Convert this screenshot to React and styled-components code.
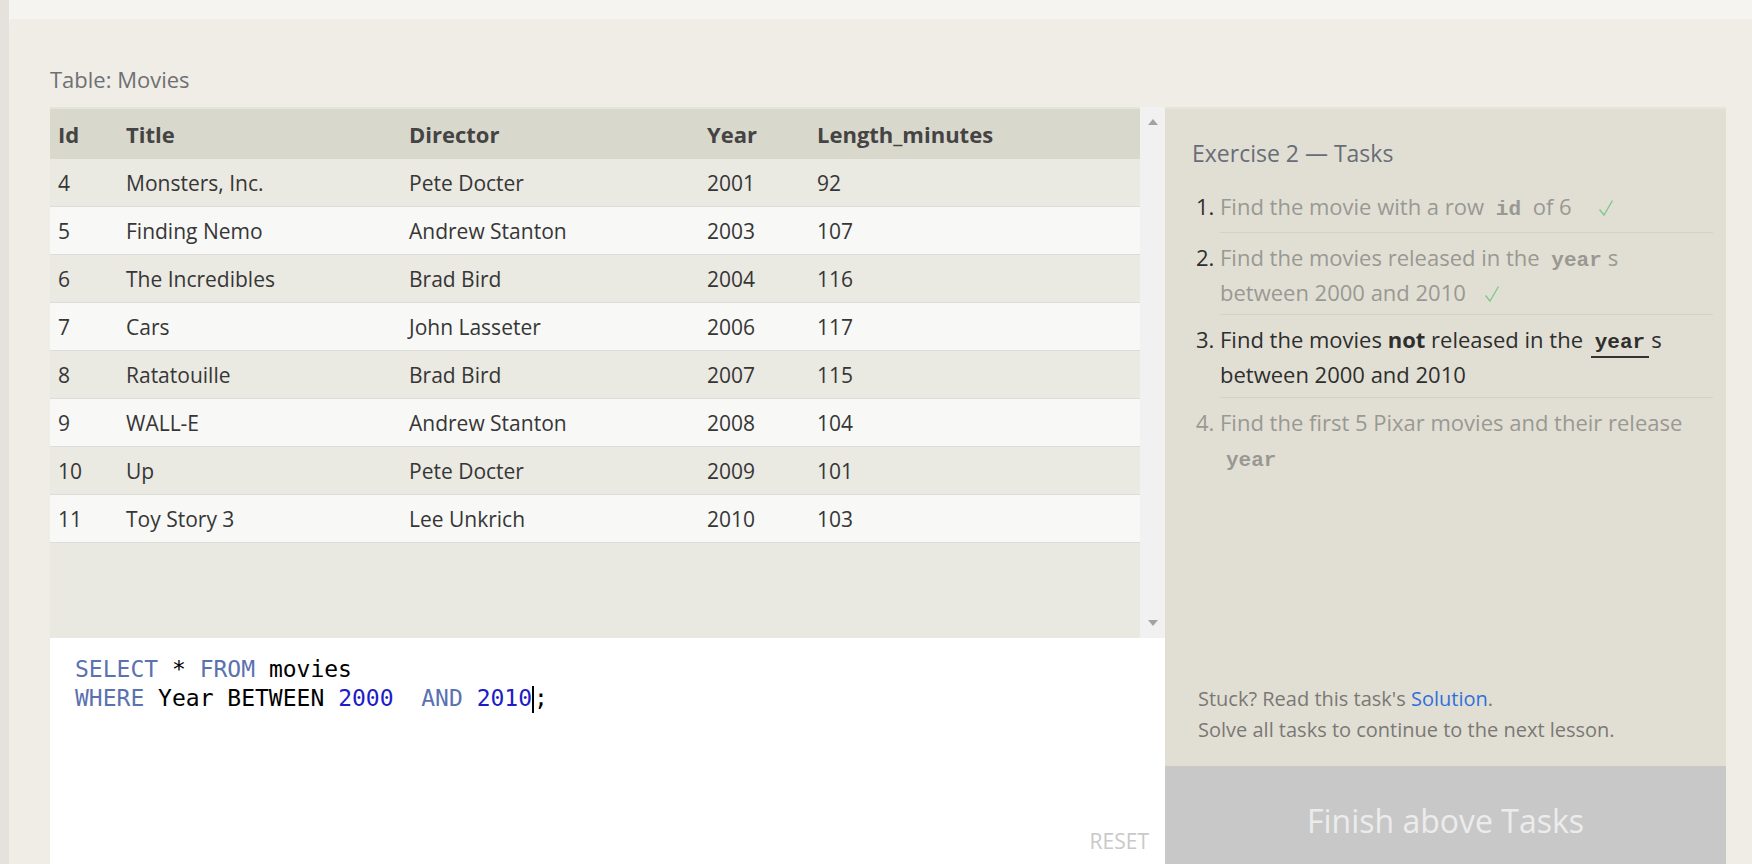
import React from 'react';
import styled, { createGlobalStyle } from 'styled-components';

const movies = [
  { id: 4, title: 'Monsters, Inc.', director: 'Pete Docter', year: 2001, length: 92 },
  { id: 5, title: 'Finding Nemo', director: 'Andrew Stanton', year: 2003, length: 107 },
  { id: 6, title: 'The Incredibles', director: 'Brad Bird', year: 2004, length: 116 },
  { id: 7, title: 'Cars', director: 'John Lasseter', year: 2006, length: 117 },
  { id: 8, title: 'Ratatouille', director: 'Brad Bird', year: 2007, length: 115 },
  { id: 9, title: 'WALL-E', director: 'Andrew Stanton', year: 2008, length: 104 },
  { id: 10, title: 'Up', director: 'Pete Docter', year: 2009, length: 101 },
  { id: 11, title: 'Toy Story 3', director: 'Lee Unkrich', year: 2010, length: 103 },
];

const columns = ['Id', 'Title', 'Director', 'Year', 'Length_minutes'];

const GlobalStyle = createGlobalStyle`
  html, body {
    margin: 0;
    padding: 0;
    background: #f5f4f0;
    font-family: "Open Sans", "Noto Sans", sans-serif;
  }
  * {
    box-sizing: border-box;
  }
`;

const CheckMark = ({ gap }) => (
  <Check $gap={gap} width="16" height="18" viewBox="0 0 16 18">
    <path d="M1.5 10.5 L6 16 L14.5 1.5" fill="none" stroke="#80c98c" strokeWidth="1.4" />
  </Check>
);

const App = () => {
  return (
    <Page>
      <GlobalStyle />
      <Strip />
      <Main>
        <TopBand />
        <Panel>
          <TableLabel>Table: Movies</TableLabel>
          <Workspace>
            <LeftCol>
              <TableArea>
                <TableScroll>
                  <HeaderRow>
                    {columns.map((c) => (
                      <HeadCell key={c}>{c}</HeadCell>
                    ))}
                  </HeaderRow>
                  {movies.map((m, i) => (
                    <Row key={m.id} $even={i % 2 === 1}>
                      <Cell>{m.id}</Cell>
                      <Cell>{m.title}</Cell>
                      <Cell>{m.director}</Cell>
                      <Cell>{m.year}</Cell>
                      <Cell>{m.length}</Cell>
                    </Row>
                  ))}
                </TableScroll>
                <Scrollbar>
                  <svg width="10" height="6" viewBox="0 0 10 6"><path d="M5 0 L10 6 L0 6 Z" fill="#a3a3a3" /></svg>
                  <svg width="10" height="6" viewBox="0 0 10 6"><path d="M0 0 L10 0 L5 6 Z" fill="#a3a3a3" /></svg>
                </Scrollbar>
              </TableArea>
              <Editor>
                <CodeLine>
                  <Kw>SELECT</Kw> * <Kw>FROM</Kw> movies
                </CodeLine>
                <CodeLine>
                  <Kw>WHERE</Kw> Year BETWEEN <Num>2000</Num>  <Kw>AND</Kw> <Num>2010</Num><Caret />;
                </CodeLine>
                <Reset>RESET</Reset>
              </Editor>
            </LeftCol>
            <TasksPanel>
              <TasksTitle>Exercise 2 — Tasks</TasksTitle>
              <TaskList>
                <Task $state="done">
                  <span>Find the movie with a row <Code>id</Code> of 6<CheckMark gap={26} /></span>
                </Task>
                <Task $state="done">
                  <span>Find the movies released in the <Code>year</Code>s between 2000 and 2010<CheckMark gap={18} /></span>
                </Task>
                <Task $state="active">
                  <span>Find the movies <b>not</b> released in the <Code $active>year</Code>s between 2000 and 2010</span>
                </Task>
                <Task $state="todo">
                  <span>Find the first 5 Pixar movies and their release <Code>year</Code></span>
                </Task>
              </TaskList>
              <Spacer />
              <Hint>
                Stuck? Read this task's <a href="#solution">Solution</a>.
                <br />
                Solve all tasks to continue to the next lesson.
              </Hint>
              <FinishButton>Finish above Tasks</FinishButton>
            </TasksPanel>
          </Workspace>
        </Panel>
      </Main>
    </Page>
  );
};

export default App;

const Page = styled.div`
  display: flex;
  width: 100vw;
  height: 100vh;
  overflow: hidden;
`;

const Strip = styled.div`
  width: 9px;
  flex-shrink: 0;
  background: #e5e1dc;
`;

const Main = styled.div`
  flex: 1;
  display: flex;
  flex-direction: column;
  min-width: 0;
`;

const TopBand = styled.div`
  height: 19px;
  flex-shrink: 0;
  background: #f5f4f0;
`;

const Panel = styled.div`
  flex: 1;
  background: #efede6;
  border-top-left-radius: 4px;
  padding: 46px 26px 0 41px;
`;

const TableLabel = styled.div`
  font-size: 22px;
  line-height: 28px;
  color: #6f7073;
  margin-bottom: 14px;
`;

const Workspace = styled.div`
  display: flex;
  height: 767px;
`;

const LeftCol = styled.div`
  flex: 1;
  display: flex;
  flex-direction: column;
  min-width: 0;
`;

const TableArea = styled.div`
  display: flex;
  height: 531px;
  flex-shrink: 0;
  background: #e9e8e1;
`;

const TableScroll = styled.div`
  flex: 1;
  color: #363636;
  font-size: 21px;
`;

const gridCols = '68px 283px 298px 110px 1fr';

const HeaderRow = styled.div`
  display: grid;
  grid-template-columns: ${gridCols};
  height: 52px;
  align-items: center;
  background: #d9d8cc;
  border-top: 2px solid #e5e4dc;
`;

const HeadCell = styled.div`
  padding-left: 8px;
  font-size: 22px;
  font-weight: 700;
  color: #444;
`;

const Row = styled.div`
  display: grid;
  grid-template-columns: ${gridCols};
  height: 48px;
  align-items: center;
  background: ${(p) => (p.$even ? '#f8f8f7' : '#eae9e2')};
  border-bottom: 1px solid #dcdcd8;
`;

const Cell = styled.div`
  padding-left: 8px;
  white-space: nowrap;
`;

const Scrollbar = styled.div`
  width: 25px;
  flex-shrink: 0;
  background: #f1f1f1;
  display: flex;
  flex-direction: column;
  justify-content: space-between;
  align-items: center;
  padding: 12px 0 12px;
`;

const Editor = styled.div`
  flex: 1;
  background: #fff;
  display: flex;
  flex-direction: column;
  padding: 17px 16px 20px 25px;
`;

const CodeLine = styled.div`
  font-family: "DejaVu Sans Mono", "Liberation Mono", monospace;
  font-size: 23px;
  line-height: 29px;
  color: #000;
  white-space: pre;
`;

const Kw = styled.span`
  color: #5a72b0;
`;

const Num = styled.span`
  color: #1c1cc8;
`;

const Caret = styled.span`
  display: inline-block;
  width: 0;
  height: 27px;
  border-left: 2px solid #000;
  vertical-align: -7px;
`;

const Reset = styled.div`
  margin-top: auto;
  align-self: flex-end;
  font-size: 21px;
  line-height: 26px;
  color: #c9c9c9;
`;

const TasksPanel = styled.div`
  width: 561px;
  flex-shrink: 0;
  display: flex;
  flex-direction: column;
  background: #e1dfd4;
  border-top: 2px solid #e6e4dc;
`;

const TasksTitle = styled.div`
  padding: 29px 0 0 27px;
  font-size: 23px;
  line-height: 30px;
  color: #686d77;
`;

const TaskList = styled.ol`
  margin: 14px 13px 0 55px;
  padding: 0;
  font-size: 22px;
  line-height: 35px;
`;

const Task = styled.li`
  padding: 7px 16px 4.5px 0;
  border-bottom: 1px solid #d4d1c6;
  color: ${(p) => (p.$state === 'todo' ? '#9a9893' : '#2e2e2e')};
  &:first-child {
    padding-bottom: 7.5px;
  }
  &:last-child {
    border-bottom: none;
  }
  > span {
    color: ${(p) => (p.$state === 'done' ? '#9a9893' : 'inherit')};
  }
  b {
    font-weight: 700;
  }
`;

const Code = styled.code`
  font-family: "Liberation Mono", "DejaVu Sans Mono", monospace;
  font-weight: 700;
  font-size: 21px;
  line-height: 1;
  padding: 0 4px 2px;
  margin: 0 2px;
  border-bottom: ${(p) => (p.$active ? '2px solid #333' : 'none')};
`;

const Check = styled.svg`
  display: inline-block;
  margin-left: ${(p) => p.$gap}px;
  vertical-align: -2px;
`;

const Spacer = styled.div`
  flex: 1;
`;

const Hint = styled.div`
  padding: 0 0 0 33px;
  margin-bottom: 21px;
  font-size: 20px;
  line-height: 31px;
  color: #7b7874;
  a {
    color: #2f6fdc;
    text-decoration: none;
  }
`;

const FinishButton = styled.div`
  height: 108px;
  flex-shrink: 0;
  display: flex;
  align-items: center;
  justify-content: center;
  background: #c8c8c8;
  color: #ececec;
  font-size: 32px;
`;
